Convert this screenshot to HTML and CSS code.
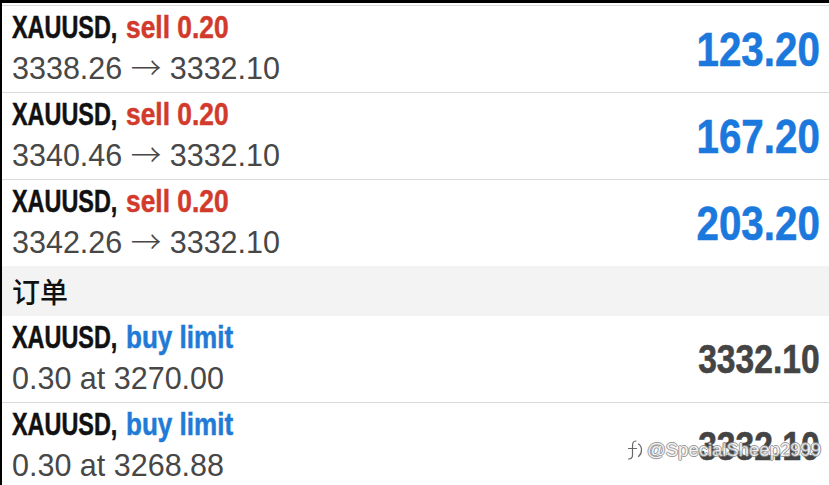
FILE: index.html
```html
<!DOCTYPE html>
<html lang="zh">
<head>
<meta charset="utf-8">
<title>Positions</title>
<link rel="stylesheet" href="styles.css">
</head>
<body>
<div class="screen">
  <div class="list">
    <div class="row">
      <div class="info">
        <div class="title"><span class="sym">XAUUSD,</span> <span class="sell">sell 0.20</span></div>
        <div class="sub">3338.26 <span class="arrow">→</span> 3332.10</div>
      </div>
      <div class="profit"><span class="num">123.20</span></div>
    </div>
    <div class="row">
      <div class="info">
        <div class="title"><span class="sym">XAUUSD,</span> <span class="sell">sell 0.20</span></div>
        <div class="sub">3340.46 <span class="arrow">→</span> 3332.10</div>
      </div>
      <div class="profit"><span class="num">167.20</span></div>
    </div>
    <div class="row last">
      <div class="info">
        <div class="title"><span class="sym">XAUUSD,</span> <span class="sell">sell 0.20</span></div>
        <div class="sub">3342.26 <span class="arrow">→</span> 3332.10</div>
      </div>
      <div class="profit"><span class="num">203.20</span></div>
    </div>
    <div class="section">订单</div>
    <div class="row">
      <div class="info">
        <div class="title"><span class="sym">XAUUSD,</span> <span class="buy">buy limit</span></div>
        <div class="sub">0.30 at 3270.00</div>
      </div>
      <div class="price"><span class="num">3332.10</span></div>
    </div>
    <div class="row">
      <div class="info">
        <div class="title"><span class="sym">XAUUSD,</span> <span class="buy">buy limit</span></div>
        <div class="sub">0.30 at 3268.88</div>
      </div>
      <div class="price"><span class="num">3332.10</span></div>
    </div>
  </div>
  <div class="watermark">
    <svg class="wm-icon" width="20" height="24" viewBox="0 0 20 24">
      <path d="M10 3 C6.5 3 6.5 6 6.5 9 L6.5 17 C6.5 20 5 21 2.5 21 M2.5 10.5 L10.5 10.5 M12.5 6 C16.5 8.5 16.5 15.5 12.5 18.5" fill="none" stroke="#fff" stroke-width="3.6" stroke-linecap="round"/>
      <path d="M10 3 C6.5 3 6.5 6 6.5 9 L6.5 17 C6.5 20 5 21 2.5 21 M2.5 10.5 L10.5 10.5 M12.5 6 C16.5 8.5 16.5 15.5 12.5 18.5" fill="none" stroke="#666" stroke-width="1.2" stroke-linecap="round"/>
    </svg>
    <span class="wm-text">@SpecialSheep2999</span>
  </div>
</div>
</body>
</html>
```
FILE: styles.css
```css
html, body {
  margin: 0;
  padding: 0;
  background: #000;
}
.screen {
  position: relative;
  width: 827px;
  height: 482px;
  margin-top: 3px;
  margin-left: 2px;
  background: #fff;
  overflow: hidden;
  font-family: "Liberation Sans", Arial, sans-serif;
}
.list {
  padding-top: 2px;
}
.list::before {
  content: "";
  display: block;
  height: 1px;
  background: #dcdcdc;
}
.row {
  display: flex;
  align-items: center;
  justify-content: space-between;
  height: 86px;
  border-bottom: 1px solid #d9d9d9;
  padding: 0 9px 0 10px;
}
.row.last {
  border-bottom: none;
}
.info {
  display: flex;
  flex-direction: column;
}
.title {
  font-weight: bold;
  font-size: 31px;
  line-height: 40px;
  color: #111;
  white-space: nowrap;
  -webkit-text-stroke: 0.5px currentColor;
  margin-top: -2px;
}
.title span {
  display: inline-block;
  transform-origin: left center;
}
.sym {
  transform: scaleX(0.755);
  margin-right: -34px;
}
.sell {
  color: #d23a2c;
  transform: scaleX(0.85);
}
.buy {
  color: #1f7bd6;
  transform: scaleX(0.84);
}
.sub {
  font-size: 30.5px;
  line-height: 41px;
  color: #474747;
  white-space: nowrap;
}
.arrow {
  font-family: "Noto Sans CJK SC", sans-serif;
  font-weight: 300;
  line-height: 1;
}
.num {
  display: inline-block;
  transform: scaleX(0.84);
  transform-origin: right center;
  -webkit-text-stroke: 0.6px currentColor;
}
.profit {
  font-weight: bold;
  font-size: 48px;
  color: #1b78dd;
}
.price {
  font-weight: bold;
  font-size: 40px;
  color: #444;
}
.section {
  height: 50px;
  display: flex;
  align-items: center;
  padding-left: 10px;
  background: #f3f3f3;
  font-family: "Noto Sans CJK SC", sans-serif;
  font-size: 28px;
  font-weight: 500;
  color: #111;
}
.watermark {
  position: absolute;
  left: 624px;
  top: 435px;
  display: flex;
  align-items: center;
  gap: 1px;
}
.wm-text {
  font-family: "Liberation Sans", sans-serif;
  font-size: 18.5px;
  color: #f2f2f2;
  text-shadow: -1px 0 #888, 1px 0 #888, 0 -1px #888, 0 1px #888;
  opacity: 0.85;
}
```
